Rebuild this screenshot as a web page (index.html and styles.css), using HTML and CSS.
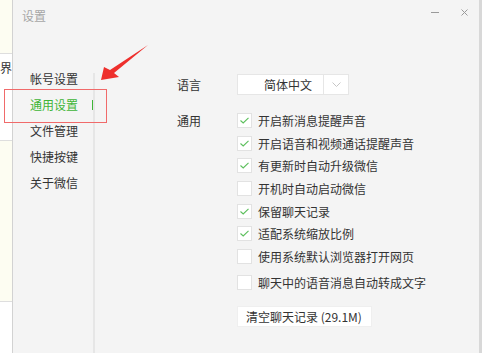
FILE: index.html
```html
<!DOCTYPE html>
<html lang="zh-CN">
<head>
    <meta charset="UTF-8">
    <meta name="viewport" content="width=device-width, initial-scale=1.0">
    <title>设置</title>
    <link rel="stylesheet" href="styles.css">
</head>
<body>
    <!-- Desktop behind the dialog -->
    <div class="desk">
        <div class="band note"></div>
        <div class="band plain"><span class="peek">界面</span></div>
        <div class="band note tall"></div>
        <div class="band plain rest"></div>
    </div>

    <!-- Settings window -->
    <div class="window">
        <div class="titlebar">
            <span class="title">设置</span>
            <div class="controls">
                <span class="min"></span>
                <svg class="close" width="7" height="7" viewBox="0 0 7 7">
                    <path d="M0.5 0.5 L6.5 6.5 M6.5 0.5 L0.5 6.5" stroke="#9a9a9a" stroke-width="1" fill="none"/>
                </svg>
            </div>
        </div>

        <div class="main">
            <div class="nav">
                <div class="nav-item">帐号设置</div>
                <div class="nav-item active">通用设置<span class="marker"></span></div>
                <div class="nav-item">文件管理</div>
                <div class="nav-item">快捷按键</div>
                <div class="nav-item">关于微信</div>
            </div>
            <div class="divider"></div>

            <div class="content">
                <div class="lang-row">
                    <span class="label">语言</span>
                    <div class="select">
                        <span class="select-value">简体中文</span>
                        <span class="select-arrow">
                            <svg width="9" height="5" viewBox="0 0 9 5">
                                <polyline points="0.5,0.5 4.5,4.5 8.5,0.5" stroke="#c6c6c6" stroke-width="1" fill="none"/>
                            </svg>
                        </span>
                    </div>
                </div>

                <div class="general-row">
                    <span class="label">通用</span>
                    <div class="options">
                        <div class="option"><span class="box checked"></span>开启新消息提醒声音</div>
                        <div class="option"><span class="box checked"></span>开启语音和视频通话提醒声音</div>
                        <div class="option"><span class="box checked"></span>有更新时自动升级微信</div>
                        <div class="option"><span class="box"></span>开机时自动启动微信</div>
                        <div class="option"><span class="box checked"></span>保留聊天记录</div>
                        <div class="option"><span class="box checked"></span>适配系统缩放比例</div>
                        <div class="option"><span class="box"></span>使用系统默认浏览器打开网页</div>
                        <div class="option spaced"><span class="box"></span>聊天中的语音消息自动转成文字</div>
                        <button type="button" class="clear-btn">清空聊天记录 (29.1M)</button>
                    </div>
                </div>
            </div>
        </div>
    </div>

    <!-- Red annotation -->
    <div class="mark-box"></div>
    <svg class="mark-arrow" width="482" height="353" viewBox="0 0 482 353">
        <polygon points="148,45 114,73 119,77 101,80 104,67 110,70" fill="#ee2f2c"/>
    </svg>
</body>
</html>
```

FILE: styles.css
```css
body {
    margin: 0;
    height: 353px;
    display: flex;
    overflow: hidden;
    background-color: #ffffff;
    font-family: "Noto Sans CJK SC", "Liberation Sans", sans-serif;
    font-size: 12px;
    color: #333333;
}

/* desktop strip on the left */
.desk {
    width: 12px;
    display: flex;
    flex-direction: column;
    overflow: hidden;
}

.band {
    border-bottom: 1px solid #dedede;
}

.band.note {
    height: 53px;
    background-color: #fdfdf2;
}

.band.note.tall {
    height: 160px;
}

.band.plain {
    height: 86px;
    background-color: #ffffff;
    padding-top: 0;
}

.band.rest {
    flex: 1;
    border-bottom: none;
}

.peek {
    display: block;
    margin-top: 7px;
    line-height: 14px;
    white-space: nowrap;
    color: #333333;
}

/* window */
.window {
    flex: 1;
    display: flex;
    flex-direction: column;
    background-color: #f4f4f4;
    border-left: 1px solid #d2d2d2;
    border-right: 3px solid #d8d8d8;
}

.titlebar {
    height: 30px;
    display: flex;
    align-items: center;
    justify-content: space-between;
    padding: 0 11px 0 9px;
}

.title {
    color: #a6a6a6;
    font-size: 12px;
}

.controls {
    display: flex;
    align-items: center;
    gap: 22px;
    margin-top: -5px;
}

.min {
    width: 8px;
    height: 1px;
    background-color: #9a9a9a;
}

.main {
    flex: 1;
    display: flex;
    margin-top: 36px;
}

.nav {
    width: 63px;
    padding-left: 17px;
    display: flex;
    flex-direction: column;
}

.nav-item {
    height: 26px;
    line-height: 26px;
    display: flex;
    align-items: center;
    justify-content: space-between;
    white-space: nowrap;
}

.nav-item.active {
    color: #3fb537;
}

.marker {
    width: 2px;
    height: 10px;
    margin-right: -1px;
    background-color: #3fb537;
}

.divider {
    width: 2px;
    margin-top: 7px;
    background-color: #e6e6e6;
}

.content {
    flex: 1;
    padding-left: 82px;
    padding-top: 8px;
}

.label {
    width: 60px;
    flex-shrink: 0;
}

.lang-row {
    display: flex;
    align-items: center;
    height: 21px;
}

.select {
    width: 112px;
    height: 21px;
    box-sizing: border-box;
    display: flex;
    background-color: #ffffff;
    border: 1px solid #e6e6e6;
}

.select-value {
    width: 86px;
    box-sizing: border-box;
    padding-left: 26px;
    line-height: 19px;
    border-right: 1px solid #e6e6e6;
}

.select-arrow {
    flex: 1;
    display: flex;
    align-items: center;
    justify-content: center;
}

.general-row {
    display: flex;
    margin-top: 18px;
}

.general-row .label {
    line-height: 15px;
}

.options {
    display: flex;
    flex-direction: column;
    align-items: flex-start;
    gap: 7.7px;
}

.option {
    height: 15px;
    display: flex;
    align-items: center;
    gap: 6px;
    white-space: nowrap;
}

.option.spaced {
    margin-top: 3.3px;
}

.box {
    width: 15px;
    height: 15px;
    box-sizing: border-box;
    background-color: #ffffff;
    border: 1px solid #e2e2e2;
}

.box.checked {
    background-image: url("data:image/svg+xml,%3Csvg xmlns='http://www.w3.org/2000/svg' width='13' height='13' viewBox='0 0 13 13'%3E%3Cpolyline points='2.5,6.5 5.2,9 10.5,3.8' stroke='%235cbf5c' stroke-width='1.1' fill='none'/%3E%3C/svg%3E");
    background-repeat: no-repeat;
}

.clear-btn {
    margin-top: 8.6px;
    width: 135px;
    height: 21px;
    padding: 0 0 0 8px;
    text-align: left;
    font-family: inherit;
    font-size: 12px;
    color: #333333;
    background-color: #ffffff;
    border: 1px solid #efefef;
}

/* annotation */
.mark-box {
    position: absolute;
    left: 4px;
    top: 89px;
    width: 101px;
    height: 32px;
    border: 1px solid #f06a6a;
}

.mark-arrow {
    position: absolute;
    left: 0;
    top: 0;
    pointer-events: none;
}
```
